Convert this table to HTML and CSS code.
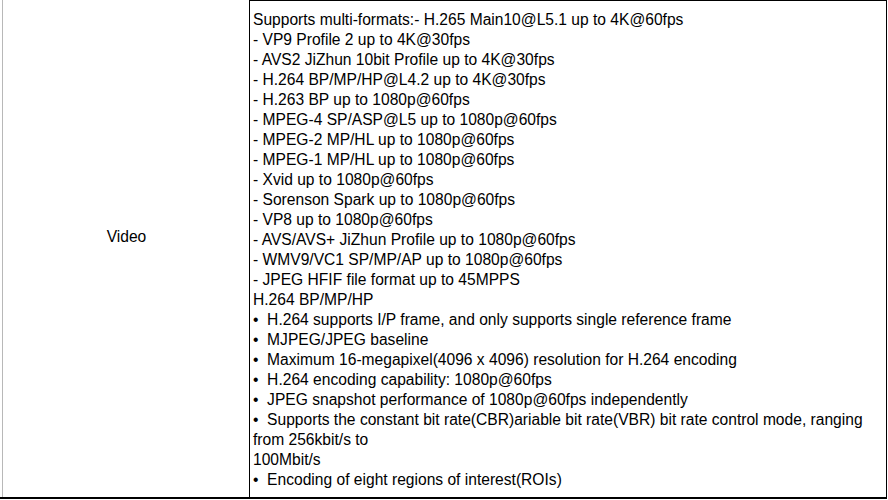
FILE: index.html
```html
<!DOCTYPE html>
<html>
<head>
<meta charset="utf-8">
<link rel="stylesheet" href="styles.css">
</head>
<body>
<table class="spec">
  <tr>
    <td class="label">Video</td>
    <td class="value">
      <div class="line">Supports multi-formats:- H.265 Main10@L5.1 up to 4K@60fps</div>
      <div class="line">- VP9 Profile 2 up to 4K@30fps</div>
      <div class="line">- AVS2 JiZhun 10bit Profile up to 4K@30fps</div>
      <div class="line">- H.264 BP/MP/HP@L4.2 up to 4K@30fps</div>
      <div class="line">- H.263 BP up to 1080p@60fps</div>
      <div class="line">- MPEG-4 SP/ASP@L5 up to 1080p@60fps</div>
      <div class="line">- MPEG-2 MP/HL up to 1080p@60fps</div>
      <div class="line">- MPEG-1 MP/HL up to 1080p@60fps</div>
      <div class="line">- Xvid up to 1080p@60fps</div>
      <div class="line">- Sorenson Spark up to 1080p@60fps</div>
      <div class="line">- VP8 up to 1080p@60fps</div>
      <div class="line">- AVS/AVS+ JiZhun Profile up to 1080p@60fps</div>
      <div class="line">- WMV9/VC1 SP/MP/AP up to 1080p@60fps</div>
      <div class="line">- JPEG HFIF file format up to 45MPPS</div>
      <div class="line">H.264 BP/MP/HP</div>
      <div class="line">•&nbsp; H.264 supports I/P frame, and only supports single reference frame</div>
      <div class="line">•&nbsp; MJPEG/JPEG baseline</div>
      <div class="line">•&nbsp; Maximum 16-megapixel(4096 x 4096) resolution for H.264 encoding</div>
      <div class="line">•&nbsp; H.264 encoding capability: 1080p@60fps</div>
      <div class="line">•&nbsp; JPEG snapshot performance of 1080p@60fps independently</div>
      <div class="line">•&nbsp; Supports the constant bit rate(CBR)ariable bit rate(VBR) bit rate control mode, ranging<br>from 256kbit/s to</div>
      <div class="line">100Mbit/s</div>
      <div class="line">•&nbsp; Encoding of eight regions of interest(ROIs)</div>
    </td>
  </tr>
</table>
</body>
</html>
```

FILE: styles.css
```css
html, body {
  margin: 0;
  padding: 0;
  background: #ffffff;
}

body {
  width: 888px;
  height: 500px;
  overflow: hidden;
  font-family: "Liberation Sans", Arial, sans-serif;
  font-size: 15.6px;
  line-height: 20px;
  color: #000000;
}

.spec {
  border-collapse: separate;
  border-spacing: 0;
  table-layout: fixed;
  width: 887px;
  height: 499px;
}

.label {
  box-sizing: border-box;
  width: 249px;
  padding: 0 0 24px 4px;
  text-align: center;
  vertical-align: middle;
  background: linear-gradient(to right, transparent 2px, #b8b8b8 2px, #b8b8b8 3px, transparent 3px);
  border-bottom: 2px solid #000000;
}

.value {
  vertical-align: top;
  text-align: left;
  border-left: 1px solid #000000;
  border-top: 1px solid #000000;
  border-right: 1px solid #000000;
  border-bottom: 2px solid #000000;
  padding: 9px 4px 7px 3px;
}

.line {
  white-space: nowrap;
}
```
